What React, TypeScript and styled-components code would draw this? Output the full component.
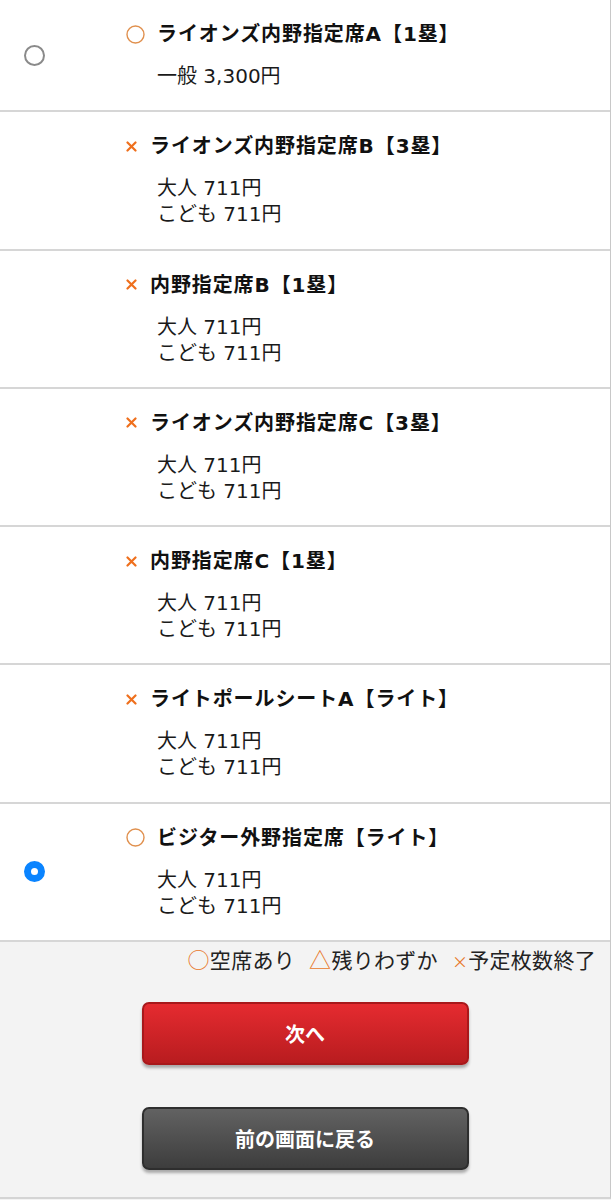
import React from "react";
import styled, { createGlobalStyle } from "styled-components";

const GlobalStyle = createGlobalStyle`
  body {
    margin: 0;
    background: #f3f3f3;
    font-family: "DejaVu Sans", "Noto Sans CJK JP", sans-serif;
    color: #111;
  }
`;

type Status = "open" | "soldout";

type Seat = {
  name: string;
  status: Status;
  prices: string[];
  selectable?: boolean;
  checked?: boolean;
};

const seats: Seat[] = [
  { name: "ライオンズ内野指定席A【1塁】", status: "open", prices: ["一般 3,300円"], selectable: true },
  { name: "ライオンズ内野指定席B【3塁】", status: "soldout", prices: ["大人 711円", "こども 711円"] },
  { name: "内野指定席B【1塁】", status: "soldout", prices: ["大人 711円", "こども 711円"] },
  { name: "ライオンズ内野指定席C【3塁】", status: "soldout", prices: ["大人 711円", "こども 711円"] },
  { name: "内野指定席C【1塁】", status: "soldout", prices: ["大人 711円", "こども 711円"] },
  { name: "ライトポールシートA【ライト】", status: "soldout", prices: ["大人 711円", "こども 711円"] },
  {
    name: "ビジター外野指定席【ライト】",
    status: "open",
    prices: ["大人 711円", "こども 711円"],
    selectable: true,
    checked: true,
  },
];

const Page = styled.div`
  border-right: 1px solid #c8c8c8;
  border-bottom: 2px solid #d4d4d4;
  min-height: 1199px;
  box-sizing: border-box;
`;

const List = styled.div`
  background: #fff;
`;

const Row = styled.div`
  display: grid;
  grid-template-columns: 126px 1fr;
  border-bottom: 2px solid #d6d6d6;
`;

const RadioCell = styled.div`
  display: flex;
  align-items: center;
  justify-content: flex-start;
  padding-left: 24px;
`;

const Radio = styled.span<{ $checked?: boolean }>`
  width: 21px;
  height: 21px;
  border-radius: 50%;
  box-sizing: border-box;
  border: ${(p) => (p.$checked ? "7px solid #0a84ff" : "2px solid #8a8a8a")};
  background: #fff;
`;

const Content = styled.div`
  padding: 21px 0 21.3px;
`;

const Title = styled.div`
  display: flex;
  align-items: center;
  font-size: 20px;
  font-weight: 700;
  line-height: 26px;
  letter-spacing: 0.9px;
  margin-bottom: 16px;
`;

const IconBox = styled.span<{ $wide?: boolean }>`
  display: inline-flex;
  align-items: center;
  width: ${(p) => (p.$wide ? "31px" : "24px")};
  flex: none;
`;

const Prices = styled.div`
  padding-left: 31px;
  font-size: 20px;
  line-height: 26px;
  color: #1a1a1a;
`;

const Footer = styled.div`
  padding: 4px 14px 0;
`;

const Legend = styled.div`
  text-align: right;
  font-family: "Noto Sans CJK JP", sans-serif;
  font-size: 21px;
  line-height: 26px;
  height: 26px;
  color: #222;
  letter-spacing: 0.3px;
`;

const Mark = styled.span<{ $small?: boolean }>`
  color: #e8782a;
  line-height: 1;
  font-size: ${(p) => (p.$small ? "16px" : "22px")};
`;

const Gap = styled.span`
  display: inline-block;
  width: 14px;
`;

const Buttons = styled.div`
  display: flex;
  flex-direction: column;
  align-items: center;
  gap: 42px;
  padding-top: 30px;
`;

const Button = styled.button<{ $variant: "red" | "gray" }>`
  width: 327px;
  height: 63px;
  border-radius: 7px;
  font-family: "Noto Sans CJK JP", sans-serif;
  font-size: 20px;
  font-weight: 700;
  color: #fff;
  cursor: pointer;
  border: 2px solid ${(p) => (p.$variant === "red" ? "#a8181b" : "#2e2e2e")};
  background: ${(p) =>
    p.$variant === "red"
      ? "linear-gradient(#e52b30, #b81c1f)"
      : "linear-gradient(#626262, #3d3d3d)"};
  box-shadow: 0 3px 3px rgba(0, 0, 0, 0.3);
`;

const StatusIcon = ({ status }: { status: Status }) =>
  status === "open" ? (
    <IconBox $wide>
      <svg width="19" height="19" viewBox="0 0 19 19">
        <circle cx="9.5" cy="9.5" r="8.5" fill="none" stroke="#e0904e" strokeWidth="1.4" />
      </svg>
    </IconBox>
  ) : (
    <IconBox>
      <svg width="11" height="11" viewBox="0 0 11 11">
        <path d="M1.5 1.5 L9.5 9.5 M9.5 1.5 L1.5 9.5" stroke="#ef6f1c" strokeWidth="2.2" strokeLinecap="round" />
      </svg>
    </IconBox>
  );

export default function App() {
  return (
    <Page>
      <GlobalStyle />
      <List>
        {seats.map((s) => (
          <Row key={s.name}>
            <RadioCell>{s.selectable && <Radio $checked={s.checked} />}</RadioCell>
            <Content>
              <Title>
                <StatusIcon status={s.status} />
                {s.name}
              </Title>
              <Prices>
                {s.prices.map((p) => (
                  <div key={p}>{p}</div>
                ))}
              </Prices>
            </Content>
          </Row>
        ))}
      </List>
      <Footer>
        <Legend>
          <Mark>○</Mark>空席あり<Gap />
          <Mark>△</Mark>残りわずか<Gap />
          <Mark $small>×</Mark>予定枚数終了
        </Legend>
        <Buttons>
          <Button $variant="red">次へ</Button>
          <Button $variant="gray">前の画面に戻る</Button>
        </Buttons>
      </Footer>
    </Page>
  );
}
